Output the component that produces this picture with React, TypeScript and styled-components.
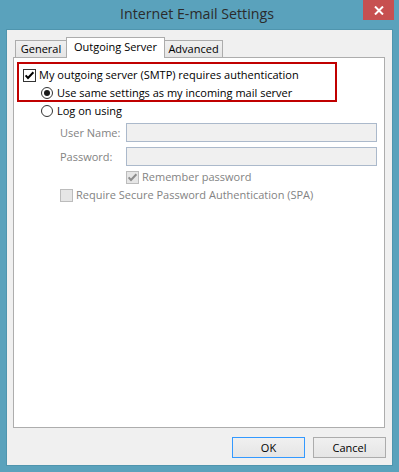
import React from 'react';
import styled, { createGlobalStyle } from 'styled-components';

const GlobalStyle = createGlobalStyle`
  html, body { margin: 0; padding: 0; }
  body {
    background: #5aa2bc;
    font-family: "Open Sans", "Noto Sans", sans-serif;
  }
  * { box-sizing: border-box; }
`;

const Window = styled.div`
  width: 399px;
  height: 472px;
  background: #5aa2bc;
  display: flex;
  flex-direction: column;
  padding: 0 6px 6px 6px;
`;

const TitleBar = styled.div`
  height: 29px;
  margin: 0 -6px;
  padding-right: 5px;
  display: grid;
  grid-template-columns: 1fr auto 1fr;
  align-items: start;
`;

const Title = styled.div`
  grid-column: 2;
  font-size: 14.2px;
  line-height: 20px;
  padding-top: 3.5px;
  color: #2b2b2b;
  white-space: nowrap;
`;

const CloseButton = styled.div`
  grid-column: 3;
  justify-self: end;
  width: 31px;
  height: 20px;
  background: #c75050;
  display: flex;
  align-items: center;
  justify-content: center;
`;

const Client = styled.div`
  flex: 1;
  background: #f0f0f0;
  border: 1px solid #4f95ae;
  display: flex;
  flex-direction: column;
  padding: 7px 6px 7px 6px;
`;

const TabStrip = styled.div`
  display: flex;
  align-items: flex-end;
  height: 20px;
  padding-left: 2px;
  position: relative;
  z-index: 1;
`;

const Tab = styled.div<{ $active?: boolean; $w: number; $side?: 'left' | 'right' }>`
  width: ${(p) => p.$w}px;
  height: ${(p) => (p.$active ? 21 : 17)}px;
  margin-bottom: ${(p) => (p.$active ? -1 : 0)}px;
  border: 1px solid #acacac;
  border-bottom: none;
  ${(p) => (p.$side === 'left' ? 'border-right: none;' : '')}
  ${(p) => (p.$side === 'right' ? 'border-left: none;' : '')}
  background: ${(p) => (p.$active ? '#ffffff' : 'linear-gradient(#f0f0f0, #e5e5e5)')};
  font-size: 11px;
  line-height: 16px;
  padding-top: ${(p) => (p.$active ? 1 : 0)}px;
  text-align: center;
  color: #000;
  white-space: nowrap;
`;

const Panel = styled.div`
  flex: 1;
  margin-right: 1px;
  background: #ffffff;
  border: 1px solid #adadad;
  display: flex;
  flex-direction: column;
  align-items: flex-start;
  padding: 4px 0 0 3px;
`;

const RedBox = styled.div`
  width: 320px;
  height: 40px;
  border: 2px solid #c00000;
  padding: 2px 0 0 4px;
`;

const Row = styled.div<{ $indent?: number; $gap?: number; $top?: number }>`
  display: flex;
  align-items: center;
  height: 18px;
  margin-left: ${(p) => p.$indent ?? 0}px;
  margin-top: ${(p) => p.$top ?? 0}px;
  gap: ${(p) => p.$gap ?? 3}px;
`;

const Label = styled.span<{ $disabled?: boolean }>`
  font-size: 11px;
  line-height: 16px;
  color: ${(p) => (p.$disabled ? '#838383' : '#000000')};
  white-space: nowrap;
`;

const Box = styled.span<{ $disabled?: boolean }>`
  width: 13px;
  height: 13px;
  flex: none;
  border: 1px solid ${(p) => (p.$disabled ? '#bcbcbc' : '#333333')};
  background: ${(p) => (p.$disabled ? '#e6e6e6' : '#ffffff')};
  display: flex;
  align-items: center;
  justify-content: center;
`;

const RadioCircle = styled.span`
  width: 12px;
  height: 12px;
  flex: none;
  border: 1px solid #333333;
  border-radius: 50%;
  background: #ffffff;
  display: flex;
  align-items: center;
  justify-content: center;
`;

const RadioDot = styled.span`
  width: 6px;
  height: 6px;
  border-radius: 50%;
  background: #1a1a1a;
`;

const Fields = styled.div`
  display: grid;
  grid-template-columns: 66px 251px;
  grid-auto-rows: 19px;
  row-gap: 5px;
  align-items: center;
  margin: 3px 0 0 43px;
`;

const Input = styled.div`
  height: 19px;
  background: #f0f0f0;
  border: 1px solid #abb9cb;
`;

const ButtonRow = styled.div`
  display: flex;
  justify-content: flex-end;
  gap: 8px;
  margin-top: 9px;
`;

const Button = styled.button<{ $default?: boolean }>`
  width: 73px;
  height: 21px;
  padding: 0;
  border: 1px solid ${(p) => (p.$default ? '#3399ff' : '#acacac')};
  background: linear-gradient(#f0f0f0, #e5e5e5);
  font-family: inherit;
  font-size: 11px;
  line-height: 16px;
  color: #000;
`;

const Check = ({ color }: { color: string }) => (
  <svg width="11" height="11" viewBox="0 0 11 11">
    <polyline points="1.6,5.4 4,8 9.4,2.2" fill="none" stroke={color} strokeWidth="2" />
  </svg>
);

const Checkbox = ({ checked, disabled }: { checked?: boolean; disabled?: boolean }) => (
  <Box $disabled={disabled}>{checked && <Check color={disabled ? '#8d8d8d' : '#000'} />}</Box>
);

const Radio = ({ checked }: { checked?: boolean }) => (
  <RadioCircle>{checked && <RadioDot />}</RadioCircle>
);

export default function App() {
  return (
    <>
      <GlobalStyle />
      <Window>
        <TitleBar>
          <Title>Internet E-mail Settings</Title>
          <CloseButton>
            <svg width="10" height="9" viewBox="0 0 10 9">
              <path d="M1 0.5 L9 8.5 M9 0.5 L1 8.5" stroke="#fff" strokeWidth="2" />
            </svg>
          </CloseButton>
        </TitleBar>
        <Client>
          <TabStrip>
            <Tab $w={51} $side="left">General</Tab>
            <Tab $w={99} $active>Outgoing Server</Tab>
            <Tab $w={58} $side="right">Advanced</Tab>
          </TabStrip>
          <Panel>
            <RedBox>
              <Row $gap={3}>
                <Checkbox checked />
                <Label>My outgoing server (SMTP) requires authentication</Label>
              </Row>
              <Row $indent={18} $gap={4}>
                <Radio checked />
                <Label>Use same settings as my incoming mail server</Label>
              </Row>
            </RedBox>
            <Row $indent={24} $gap={4}>
              <Radio />
              <Label>Log on using</Label>
            </Row>
            <Fields>
              <Label $disabled>User Name:</Label>
              <Input />
              <Label $disabled>Password:</Label>
              <Input />
            </Fields>
            <Row $indent={109} $top={2} $gap={3}>
              <Checkbox checked disabled />
              <Label $disabled>Remember password</Label>
            </Row>
            <Row $indent={43} $gap={3}>
              <Checkbox disabled />
              <Label $disabled>Require Secure Password Authentication (SPA)</Label>
            </Row>
          </Panel>
          <ButtonRow>
            <Button $default>OK</Button>
            <Button>Cancel</Button>
          </ButtonRow>
        </Client>
      </Window>
    </>
  );
}
